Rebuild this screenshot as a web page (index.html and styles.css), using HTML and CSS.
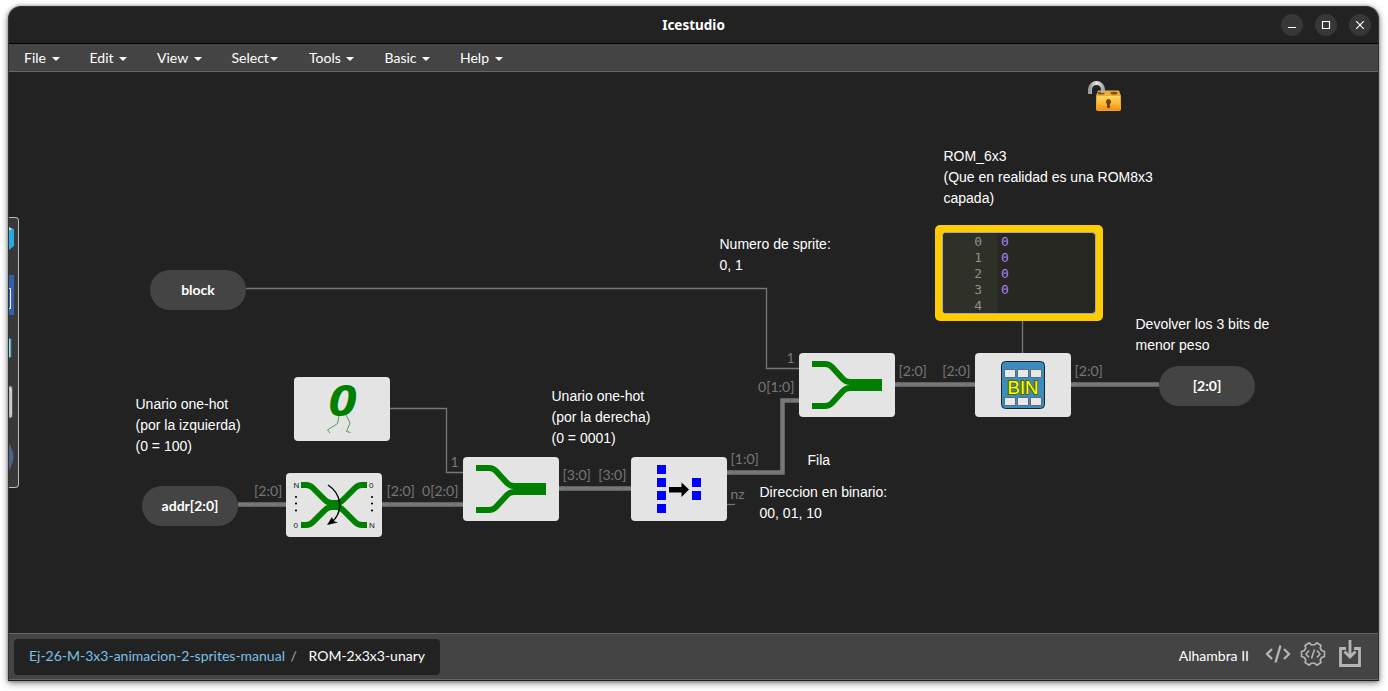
FILE: index.html
```html
<!DOCTYPE html>
<html lang="es">
<head>
<meta charset="utf-8">
<title>Icestudio</title>
<link rel="stylesheet" href="styles.css">
</head>
<body>
<div class="window">
  <header class="titlebar">
    <span class="title">Icestudio</span>
    <div class="controls">
      <span class="control"><svg width="22" height="22"><path d="M7 13.500h8"/></svg></span>
      <span class="control"><svg width="22" height="22"><path d="M7.500 7.500h7v7h-7z"/></svg></span>
      <span class="control"><svg width="22" height="22"><path d="M7.200 7.200l7.600 7.600M14.800 7.200l-7.600 7.600"/></svg></span>
    </div>
  </header>
  <nav class="menubar">
    <span class="item file">File<i class="caret"></i></span>
    <span class="item edit">Edit<i class="caret"></i></span>
    <span class="item view">View<i class="caret"></i></span>
    <span class="item select">Select<i class="caret tight"></i></span>
    <span class="item tools">Tools<i class="caret"></i></span>
    <span class="item basic">Basic<i class="caret"></i></span>
    <span class="item help">Help<i class="caret"></i></span>
  </nav>
  <main class="canvas">
    <svg class="wires" width="1369" height="561" viewBox="9 72 1369 561">
      <g class="thin">
        <path d="M246 288.500H766.500V368.500H799"/>
        <path d="M390 408.500H446.500V472.500H463"/>
        <path d="M727 504.500H735"/>
        <path d="M1022.500 321V353"/>
      </g>
      <g class="bus">
        <path d="M238 504.500H286M382 504.500H463M559 488.500H631M895 384.500H975M1071 384.500H1159"/>
        <path d="M727 472.500H782.500V400.500H799"/>
      </g>
      <path class="tick" d="M254.500 502v5M278.500 502v5M390.500 502v5M454.500 502v5M566.500 486v5M622.500 486v5M734.500 470v5M790.500 398v5M902.500 382v5M966.500 382v5M1078.500 382v5"/>
      <g class="port">
        <text x="254" y="496">[2:0]</text>
        <text x="386.500" y="496">[2:0]</text>
        <text x="458.500" y="496" text-anchor="end">0[2:0]</text>
        <text x="458.500" y="467" text-anchor="end">1</text>
        <text x="562.500" y="480">[3:0]</text>
        <text x="626.500" y="480" text-anchor="end">[3:0]</text>
        <text x="730.500" y="464">[1:0]</text>
        <text x="730.500" y="499">nz</text>
        <text x="794.500" y="363" text-anchor="end">1</text>
        <text x="794.500" y="392" text-anchor="end">0[1:0]</text>
        <text x="898.500" y="376">[2:0]</text>
        <text x="970.500" y="376" text-anchor="end">[2:0]</text>
        <text x="1074.500" y="376">[2:0]</text>
      </g>
    </svg>
    <div class="board">
      <div class="pin in-block">block</div>
      <div class="pin in-addr">addr[2:0]</div>
      <div class="pin out">[2:0]</div>

      <div class="block zero">
        <svg width="96" height="64">
          <text class="walker" x="34.500" y="39" textLength="28" lengthAdjust="spacingAndGlyphs">0</text>
          <path class="legs" d="M45 39l-1.500 7.500-10 6.500 2.500 3M52 38l4 8-3.500 8.500 4 1"/>
        </svg>
      </div>
      <div class="block swap">
        <svg width="96" height="64">
          <path class="route" stroke-width="6" d="M15 12h5c3 0 5 1 7 3l12 12c2 2 4 3 7 3h5c3 0 4-1 6-3l12-12c2-2 4-3 7-3h5M15 52h5c3 0 5-1 7-3l12-12c2-2 4-3 7-3h5c3 0 4 1 6 3l12 12c2 2 4 3 7 3h5"/>
          <path class="arc" d="M42 12C56 21 57 38 47 48"/>
          <path d="M41 52l5-8 1.500 4 4.500 1.500z"/>
          <g class="dots"><circle cx="10" cy="24" r="1.100"/><circle cx="10" cy="30.500" r="1.100"/><circle cx="10" cy="37.500" r="1.100"/><circle cx="86" cy="24" r="1.100"/><circle cx="86" cy="30.500" r="1.100"/><circle cx="86" cy="37.500" r="1.100"/></g>
          <g class="tiny"><text x="7.500" y="15">N</text><text x="83" y="15">0</text><text x="7.500" y="55">0</text><text x="83" y="55">N</text></g>
        </svg>
      </div>
      <div class="block join-a">
        <svg width="96" height="64">
          <path class="route" stroke-width="6" d="M13 11h13c3 0 5 1 7 3l11 12c2 2 4 3 7 3h8M13 53h13c3 0 5-1 7-3l11-12c2-2 4-3 7-3h8"/>
          <path class="solid" d="M50 26h33v12H50z"/>
        </svg>
      </div>
      <div class="block encoder">
        <svg width="96" height="64">
          <path class="bit" d="M26 8h9v9h-9zM26 21h9v9h-9zM26 34h9v9h-9zM26 47h9v9h-9zM61 21h9v9h-9zM61 34h9v9h-9z"/>
          <path d="M38 30h12.500v-4.500L58 32.500l-7.500 7.500v-4.500H38z"/>
        </svg>
      </div>
      <div class="block join-b">
        <svg width="96" height="64">
          <path class="route" stroke-width="6" d="M13 11h13c3 0 5 1 7 3l11 12c2 2 4 3 7 3h8M13 53h13c3 0 5-1 7-3l11-12c2-2 4-3 7-3h8"/>
          <path class="solid" d="M50 26h33v12H50z"/>
        </svg>
      </div>
      <div class="block rom">
        <svg width="96" height="64">
          <rect class="chip" x="26.500" y="8.500" width="43" height="47" rx="4"/>
          <path class="cells" d="M29.500 16.500h11v8h-11zM42.500 16.500h11v8h-11zM55.500 16.500h11v8h-11zM29.500 44.500h11v8h-11zM42.500 44.500h11v8h-11zM55.500 44.500h11v8h-11z"/>
          <text class="bin" x="32.500" y="41" textLength="31" lengthAdjust="spacingAndGlyphs">BIN</text>
        </svg>
      </div>

      <div class="memory">
        <div class="code">
          <div class="gutter"><span>0</span><span>1</span><span>2</span><span>3</span><span>4</span></div>
          <div class="values"><span>0</span><span>0</span><span>0</span><span>0</span></div>
        </div>
      </div>

      <p class="note n-rom">ROM_6x3<br>(Que en realidad es una ROM8x3<br>capada)</p>
      <p class="note n-sprite">Numero de sprite:<br>0, 1</p>
      <p class="note n-bits">Devolver los 3 bits de<br>menor peso</p>
      <p class="note n-left">Unario one-hot<br>(por la izquierda)<br>(0 = 100)</p>
      <p class="note n-right">Unario one-hot<br>(por la derecha)<br>(0 = 0001)</p>
      <p class="note n-row">Fila</p>
      <p class="note n-dir">Direccion en binario:<br>00, 01, 10</p>

      <svg class="lock" width="36" height="34" viewBox="0 0 36 34">
        <defs>
          <linearGradient id="gold" x2="0" y2="1"><stop offset="0" stop-color="#ffda65"/><stop offset=".5" stop-color="#ffba38"/><stop offset="1" stop-color="#f08d12"/></linearGradient>
          <linearGradient id="steel"><stop offset="0" stop-color="#999"/><stop offset=".5" stop-color="#e6e6e8"/><stop offset="1" stop-color="#aaa"/></linearGradient>
        </defs>
        <path d="M9 16l2-5.500h21l2 5.500z" fill="#f0ad36"/>
        <ellipse cx="14" cy="13.200" rx="3.500" ry="1.400" fill="#75501c"/>
        <ellipse cx="27" cy="13.200" rx="3.500" ry="1.400" fill="#75501c"/>
        <path d="M3 14V9.500a6.500 6.500 0 0 1 13 0V13" fill="none" stroke="url(#steel)" stroke-width="4"/>
        <rect x="9.500" y="15.500" width="24" height="15" rx="1" fill="url(#gold)" stroke="#f4a52a"/>
        <path d="M21.500 19a2.800 2.800 0 0 1 1.500 5v4h-3v-4a2.800 2.800 0 0 1 1.500-5z" fill="#704314"/>
      </svg>
      <div class="drawer">
        <svg width="10" height="269" viewBox="9 218 10 269">
          <path fill="#27a9e1" d="M9 228l5 1v17l-5 4z"/><path fill="#a2e2fa" d="M9 227l3 1.500-2 2-1-.500z"/>
          <path fill="#3260ad" d="M9 275h5v40H9z"/><path fill="#3260ad" stroke="#eee" d="M8 288.500h2.500v20H8z"/>
          <rect x="6" y="338.500" width="5" height="19" rx="1" fill="#9de0e9" stroke="#25758f"/>
          <rect x="5" y="386" width="7.500" height="32" rx="2" fill="#b8b8b2" stroke="#555"/>
          <path d="M6 389h5v26" fill="none" stroke="#e4e4df"/>
          <path fill="#4c6390" d="M9 444q9 12 0 26z"/>
        </svg>
      </div>
    </div>
  </main>
  <footer class="footer">
    <div class="crumbs"><span class="project">Ej-26-M-3x3-animacion-2-sprites-manual</span><span class="slash">/</span><span class="current">ROM-2x3x3-unary</span></div>
    <div class="tools-right">
      <span class="device">Alhambra II</span>
      <svg class="code-icon" width="26" height="20" viewBox="0 0 26 20"><path d="M7 5L2 10l5 5M19 5l5 5-5 5M15.500 1.500l-5 17"/></svg>
      <svg class="gear" width="26" height="26" viewBox="0 0 26 26"><path d="M24.500 10.500V15.500L21.700 16.500L20.200 19L21 21.500L16.700 24.200L14.600 22.200H11.400L9.300 24.200L5 21.500L5.800 19L4.300 16.500L1.500 15.500V10.500L4.300 9.500L5.800 7L5 4.500L9.300 1.800L11.400 3.800H14.600L16.700 1.800L21 4.500L20.200 7L21.700 9.500Z"/><path d="M9 9.500l-3 3.500 3 3.500M17 9.500l3 3.500-3 3.500M14.500 8.500l-3 9"/></svg>
      <svg class="load" width="22" height="28" viewBox="0 0 22 28"><path d="M7 8.500H1.500v17h19v-17H15M11 0v16.500M5.500 11.500L11 17l5.500-5.500"/></svg>
    </div>
  </footer>
</div>
</body>
</html>
```

FILE: styles.css
```css
* { box-sizing: border-box; }
body { margin: 0; height: 691px; overflow: hidden; background: #fff; font-family: Lato, "Open Sans", sans-serif; font-size: 14px; color: #fff; }
svg { display: block; flex: none; }
.window { width: 1371px; height: 675px; margin: 6px 0 0 8px; display: flex; flex-direction: column; background: #222; border: 1px solid #333; border-bottom-color: #202020; border-radius: 13px 13px 0 0; overflow: hidden; box-shadow: 0 2px 7px rgba(0,0,0,.5), 0 0 3px rgba(0,0,0,.35); }

.titlebar { flex: none; height: 37px; border-bottom: 1px solid #000; display: grid; grid-template-columns: 1fr auto 1fr; align-items: center; }
.title { grid-column: 2; font: bold 13.500px/36px "Noto Sans", sans-serif; }
.controls { grid-column: 3; display: flex; justify-content: flex-end; gap: 12px; padding-right: 7px; }
.control { width: 22px; height: 22px; border-radius: 50%; background: #373737; }
.control svg { fill: none; stroke: #fff; stroke-width: 1.200; }

.menubar { flex: none; height: 28px; background: #444; border-bottom: 1px solid #666; display: flex; align-items: center; padding-left: 15px; }
.item { display: flex; align-items: center; line-height: 27px; }
.caret { margin-left: 5.500px; margin-top: 2px; border: 4px solid transparent; border-top-color: #fff; border-bottom: 0; }
.file .caret { margin-left: 6px; }
.tight { margin-left: 1px; }
.file { width: 65.500px; }
.edit { width: 67.500px; }
.view { width: 74.500px; }
.select { width: 77.500px; }
.tools { width: 75.500px; }
.basic { width: 75.500px; }

.canvas { flex: none; height: 561px; position: relative; overflow: hidden; background: #222; }
.board { position: absolute; left: -9px; top: -72px; width: 1388px; height: 691px; }
.wires { position: absolute; left: 0; top: 0; }
.thin { fill: none; stroke: #777; stroke-width: 1.300; }
.bus { fill: none; stroke: #777; stroke-width: 4.500; }
.tick { stroke: #666; }
.port { fill: #777; font-size: 14px; }

.pin { position: absolute; width: 96px; height: 40px; border-radius: 20px; background: #444; font-weight: bold; line-height: 40px; text-align: center; }
.in-block { left: 150px; top: 270px; }
.in-addr { left: 142px; top: 486px; }
.out { left: 1159px; top: 366px; }

.block { position: absolute; width: 96px; height: 64px; border-radius: 4px; background: #e4e4e4; }
.block svg { overflow: visible; }
.zero { left: 294px; top: 377px; }
.swap { left: 286px; top: 473px; }
.join-a { left: 463px; top: 457px; }
.encoder { left: 631px; top: 457px; }
.join-b { left: 799px; top: 353px; }
.rom { left: 975px; top: 353px; }
.route { fill: none; stroke: green; }
.solid { fill: green; }
.bit { fill: #00f; }
.walker { font: italic bold 42.500px "Open Sans", sans-serif; fill: green; }
.legs { fill: none; stroke: #50a050; }
.arc { fill: none; stroke: #000; stroke-width: 1.400; }
.tiny { font: 8px "Liberation Sans", sans-serif; fill: #113; }
.chip { fill: #3c8dbc; stroke: #17262e; }
.cells { fill: #e8e8e8; stroke: #596e7a; }
.bin { font: 18px "Liberation Sans", sans-serif; fill: #ff0; stroke: #5b6300; stroke-width: 2; paint-order: stroke; }

.memory { position: absolute; left: 935px; top: 225px; width: 168px; height: 96px; padding: 7px; background: #fc0; border-radius: 5px; }
.code { height: 82px; display: flex; overflow: hidden; border: 1px solid #aaa; border-radius: 4px; background: #272822; font: 13px/16px "DejaVu Sans Mono", monospace; }
.code span { display: block; position: relative; top: 1px; }
.gutter { width: 54px; padding-right: 15px; background: #2f3129; color: #8f908a; text-align: right; }
.values { padding-left: 4px; color: #ae81ff; }

.note { position: absolute; margin: 0; font: 14px/21px "Liberation Sans", Arial, sans-serif; white-space: nowrap; }
.n-rom { left: 943.500px; top: 146px; }
.n-sprite { left: 719.500px; top: 234px; }
.n-bits { left: 1135.500px; top: 314px; }
.n-left { left: 135.500px; top: 394px; }
.n-right { left: 551.500px; top: 386px; }
.n-row { left: 807.500px; top: 450px; }
.n-dir { left: 759.500px; top: 482px; }
.lock { position: absolute; left: 1087px; top: 80px; }
.drawer { position: absolute; left: 9px; top: 217px; width: 10px; height: 271px; border: 1px solid #bbb; border-left: 0; border-radius: 0 4px 4px 0; background: #383838; overflow: hidden; }

.footer { flex: none; height: 47px; background: #444; border-top: 1px solid #666; border-bottom: 1px solid #666; display: flex; align-items: center; justify-content: space-between; padding: 0 17px 0 5px; }
.crumbs { width: 426px; height: 36px; padding-left: 15px; border-radius: 4px; background: #222; display: flex; line-height: 34px; white-space: nowrap; }
.project { color: #79c1e8; width: 261.500px; }
.slash { color: #aaa; width: 18px; }
.tools-right { display: flex; align-items: center; }
.device { margin-top: -2px; margin-right: 16px; }
.tools-right svg { fill: none; stroke: #b5b5b5; }
.code-icon { stroke-width: 2.300; margin-right: 9px; margin-top: -5px; }
.tools-right .gear { stroke-width: 1.600; stroke-linejoin: round; margin-right: 13px; margin-top: -5px; }
.load { stroke-width: 2.800; margin-top: -5px; }
```
